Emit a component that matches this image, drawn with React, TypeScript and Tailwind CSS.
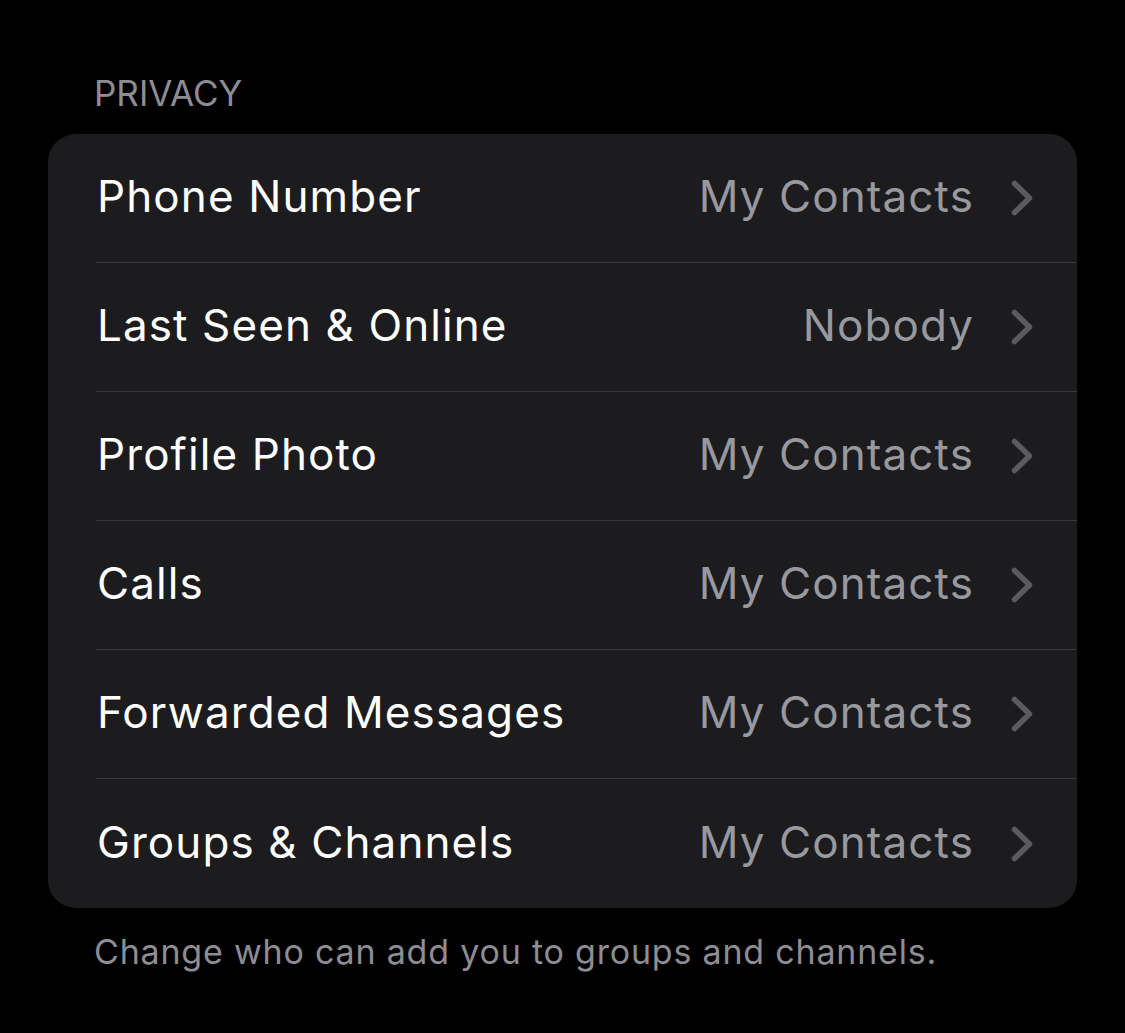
import React from "react";

const rows = [
  { label: "Phone Number", value: "My Contacts" },
  { label: "Last Seen & Online", value: "Nobody" },
  { label: "Profile Photo", value: "My Contacts" },
  { label: "Calls", value: "My Contacts" },
  { label: "Forwarded Messages", value: "My Contacts" },
  { label: "Groups & Channels", value: "My Contacts" },
];

function Chevron() {
  return (
    <svg width="22" height="36" viewBox="0 0 22 36" className="ml-[37px] shrink-0">
      <polyline
        points="3.5,3.5 18.5,18 3.5,32.5"
        fill="none"
        stroke="#5a5a5f"
        strokeWidth="5.5"
        strokeLinecap="round"
        strokeLinejoin="round"
      />
    </svg>
  );
}

export default function App() {
  return (
    <div className="min-h-screen bg-black px-[48px] pt-[72px] font-['Inter',sans-serif] w-[1125px]">
      {/* section header */}
      <div className="pl-[46px] mb-[20px] text-[35px] leading-[42px] text-[#8d8d93]">
        PRIVACY
      </div>

      <div className="w-[1029px] rounded-[28px] bg-[#1c1c1e] overflow-hidden">
        {rows.map((row, i) => (
          <div key={i} className="pl-[48px]">
            <div
              className={
                "flex items-center h-[129px] pr-[44px] " +
                (i < rows.length - 1 ? "border-b border-[#38383a]" : "")
              }
            >
              <span className="pl-[1px] pb-[4px] flex-1 text-[44px] text-white tracking-[1.1px]">
                {row.label}
              </span>
              <span className="pb-[4px] text-[44px] text-[#98989f] tracking-[1.1px]">{row.value}</span>
              <Chevron />
            </div>
          </div>
        ))}
      </div>

      {/* section footer */}
      <div className="pl-[46px] mt-[23px] text-[34px] leading-[42px] text-[#8d8d93] tracking-[0.8px]">
        Change who can add you to groups and channels.
      </div>
    </div>
  );
}
